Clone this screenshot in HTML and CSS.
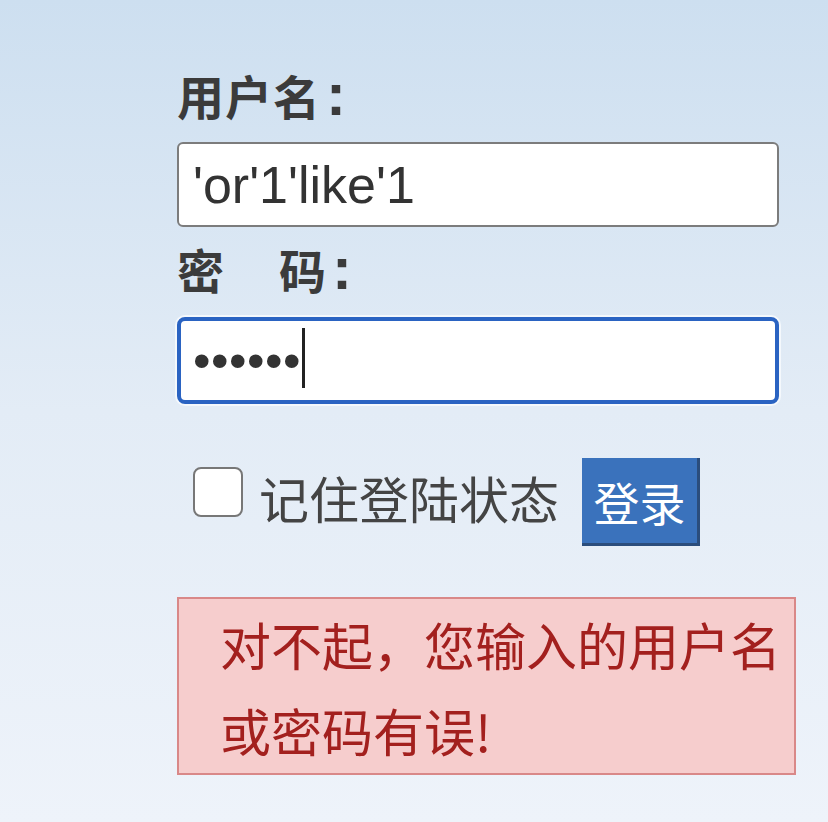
FILE: index.html
```html
<!DOCTYPE html>
<html lang="zh-CN">

<head>
    <meta charset="UTF-8" />
    <meta name="viewport" content="width=device-width, initial-scale=1.0" />
    <title>用户登录</title>
    <link rel="stylesheet" href="styles.css">
</head>

<body>
    <!-- 登录表单 -->
    <form class="login" onsubmit="return false;">
        <label class="label" for="username">用户名<span class="colon">:</span></label>
        <input class="field" id="username" type="text" value="'or'1'like'1" />

        <label class="label" for="password">密<span class="sp"></span>码<span class="colon">:</span></label>
        <div class="field-wrap">
            <input class="field focused" id="password" type="password" value="123456" />
            <span class="caret"></span>
        </div>

        <div class="row">
            <input class="check" id="remember" type="checkbox" />
            <label class="remember" for="remember">记住登陆状态</label>
            <button class="btn" type="submit">登录</button>
        </div>

        <!-- 错误提示 -->
        <div class="error">对不起，您输入的用户名或密码有误!</div>
    </form>
</body>

</html>
```

FILE: styles.css
```css
html,
body {
    margin: 0;
    padding: 0;
    min-height: 100vh;
}

body {
    font-family: "Liberation Sans", "Noto Sans CJK SC", sans-serif;
    background: linear-gradient(to bottom, #cddff0 0%, #e3ecf6 50%, #eef3fa 100%);
    color: #3b3b3b;
}

/* 表单 */
.login {
    width: 602px;
    padding: 71px 0 0 177px;
}

.label {
    display: block;
    height: 56px;
    font-size: 47px;
    line-height: 56px;
    letter-spacing: 1px;
    font-weight: bold;
    color: #3b3b3b;
}

.label .sp {
    display: inline-block;
    width: 54px;
}

.label .colon {
    font-family: "Liberation Sans", sans-serif;
    font-size: 60px;
    line-height: 0;
    margin-left: 5px;
}

.field {
    display: block;
    box-sizing: border-box;
    width: 602px;
    height: 85px;
    margin: 15px 0 18px;
    padding: 0 14px;
    border: 2px solid #7c7c7c;
    border-radius: 6px;
    background: #fff;
    font-family: "Liberation Sans", sans-serif;
    font-size: 52px;
    color: #333;
    outline: none;
}

.field-wrap {
    position: relative;
    margin-top: 16px;
}

.field.focused {
    margin: 0;
    height: 87px;
    border: 4px solid #2a63c2;
    border-radius: 8px;
    padding: 0 12px;
    font-size: 50px;
    letter-spacing: 0.5px;
    box-shadow: 0 0 0 2px #f4f8fc;
}

.caret {
    position: absolute;
    left: 125px;
    top: 11px;
    width: 3px;
    height: 60px;
    background: #222;
}

/* 记住登录 */
.row {
    display: flex;
    align-items: center;
    margin-top: 54px;
    padding-left: 16px;
}

.check {
    appearance: none;
    -webkit-appearance: none;
    box-sizing: border-box;
    width: 50px;
    height: 50px;
    margin: 0 16px 20px 0;
    border: 2px solid #777;
    border-radius: 8px;
    background: #fff;
}

.remember {
    font-size: 50px;
    line-height: 60px;
    color: #444;
    font-family: "Noto Sans CJK SC", sans-serif;
    margin: 0 23px 10px 0;
}

.btn {
    box-sizing: border-box;
    width: 118px;
    height: 88px;
    padding: 0;
    border: none;
    border-right: 3px solid #2b4d7c;
    border-bottom: 3px solid #2b4d7c;
    background-color: #3a72bc;
    color: #fff;
    font-family: "Noto Sans CJK SC", sans-serif;
    font-size: 46px;
    cursor: pointer;
}

/* 错误提示 */
.error {
    box-sizing: border-box;
    width: 619px;
    margin: 51px 0 0 0;
    padding: 2px 0 0 41px;
    background: #f6cdcd;
    border: 2px solid #d98888;
    color: #a3201e;
    font-family: "Noto Sans CJK SC", sans-serif;
    font-size: 51px;
    line-height: 86px;
}
```
